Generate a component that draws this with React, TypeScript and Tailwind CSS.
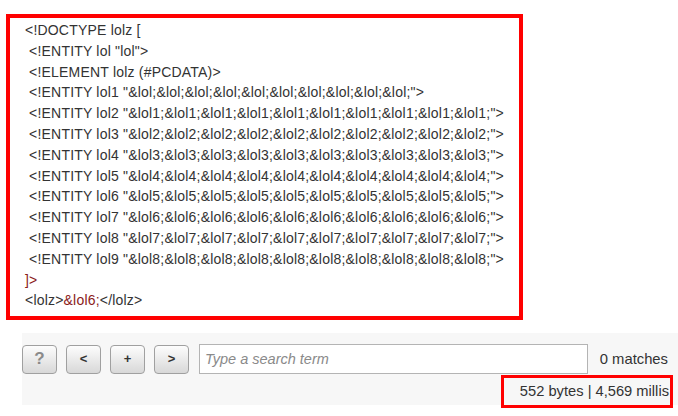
import React from "react";

const lines: { text: string; red?: boolean }[] = [
  { text: "<!DOCTYPE lolz [" },
  { text: " <!ENTITY lol \"lol\">" },
  { text: " <!ELEMENT lolz (#PCDATA)>" },
  { text: " <!ENTITY lol1 \"&lol;&lol;&lol;&lol;&lol;&lol;&lol;&lol;&lol;&lol;\">" },
  { text: " <!ENTITY lol2 \"&lol1;&lol1;&lol1;&lol1;&lol1;&lol1;&lol1;&lol1;&lol1;&lol1;\">" },
  { text: " <!ENTITY lol3 \"&lol2;&lol2;&lol2;&lol2;&lol2;&lol2;&lol2;&lol2;&lol2;&lol2;\">" },
  { text: " <!ENTITY lol4 \"&lol3;&lol3;&lol3;&lol3;&lol3;&lol3;&lol3;&lol3;&lol3;&lol3;\">" },
  { text: " <!ENTITY lol5 \"&lol4;&lol4;&lol4;&lol4;&lol4;&lol4;&lol4;&lol4;&lol4;&lol4;\">" },
  { text: " <!ENTITY lol6 \"&lol5;&lol5;&lol5;&lol5;&lol5;&lol5;&lol5;&lol5;&lol5;&lol5;\">" },
  { text: " <!ENTITY lol7 \"&lol6;&lol6;&lol6;&lol6;&lol6;&lol6;&lol6;&lol6;&lol6;&lol6;\">" },
  { text: " <!ENTITY lol8 \"&lol7;&lol7;&lol7;&lol7;&lol7;&lol7;&lol7;&lol7;&lol7;&lol7;\">" },
  { text: " <!ENTITY lol9 \"&lol8;&lol8;&lol8;&lol8;&lol8;&lol8;&lol8;&lol8;&lol8;&lol8;\">" },
];

function ToolButton({ label, faded }: { label: string; faded?: boolean }) {
  return (
    <button
      className={
        "w-[35px] h-[29px] rounded-[4px] border border-[#a0a0a0] bg-gradient-to-b from-[#fdfdfd] to-[#d8d8d8] flex items-center justify-center font-bold " +
        (faded ? "text-[17px] text-[#8a8a8a]" : "text-[13px] text-[#333]")
      }
    >
      {label}
    </button>
  );
}

export default function App() {
  return (
    <div className="w-[678px] h-[416px] bg-white font-['Liberation_Sans',Arial,sans-serif] overflow-hidden">
      <div className="ml-[6px] mt-[14px] w-[517px] h-[306px] border-4 border-[#ff0000] pl-[15px] pt-[2px] text-[14px] tracking-[0.2px] leading-[20.8px] text-[#333]">
        {lines.map((l, i) => (
          <div key={i} className="whitespace-pre">
            {l.text}
          </div>
        ))}
        <div className="text-[#8b1a1a]">]&gt;</div>
        <div className="whitespace-pre">
          &lt;lolz&gt;<span className="text-[#8b1a1a]">&amp;lol6;</span>&lt;/lolz&gt;
        </div>
      </div>

      <div className="ml-[22px] mt-[13px] h-[72px] pt-[11px] bg-[#f7f7f7]">
        <div className="flex items-center gap-[9px] h-[30px]">
          <ToolButton label="?" faded />
          <ToolButton label="<" />
          <ToolButton label="+" />
          <ToolButton label=">" />
          <input
            className="ml-[1px] w-[389px] h-[30px] border border-[#b4b4b4] bg-white px-[5px] text-[14.5px] italic text-[#333] placeholder:text-[#8a8a8a] outline-none"
            placeholder="Type a search term"
          />
          <div className="flex-1 text-right pr-[10px] text-[14.8px] text-[#333]">0 matches</div>
        </div>
        <div className="flex justify-end">
          <div className="mr-[5px] mt-[1px] w-[172px] h-[33px] border-[3px] border-[#ff0000] flex items-center justify-end pr-[1px] text-[14.7px] text-[#333]">
            552 bytes | 4,569 millis
          </div>
        </div>
      </div>
    </div>
  );
}
